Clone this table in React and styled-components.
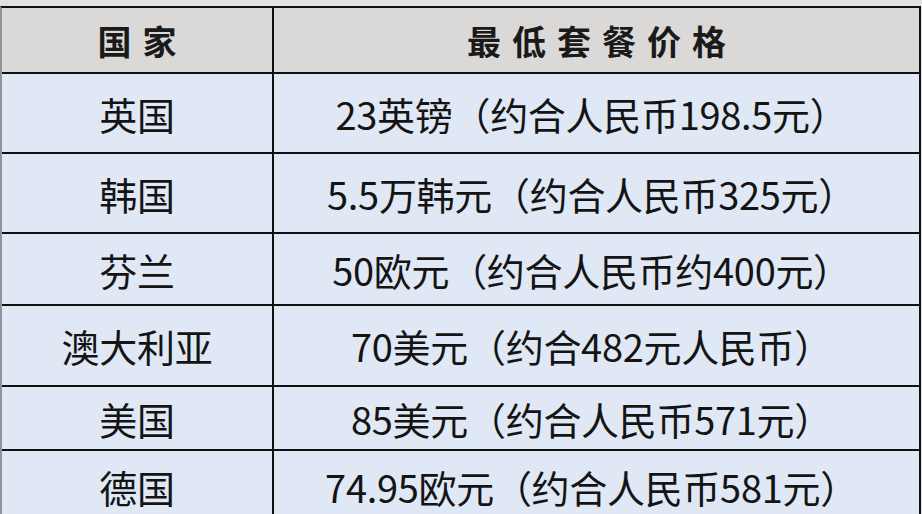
import React from 'react';
import styled, { createGlobalStyle } from 'styled-components';

const GlobalStyle = createGlobalStyle`
  html, body {
    margin: 0;
    padding: 0;
    background: #e2e2e5;
    overflow: hidden;
  }
`;

const Page = styled.div`
  width: 922px;
  height: 514px;
  padding-top: 6px;
  box-sizing: border-box;
  background: #e2e2e5;
  overflow: hidden;
`;

const Table = styled.div`
  width: 921px;
  border-top: 2px solid #111;
  border-left: 2px solid #8e949c;
  border-right: 2px solid #111;
  box-sizing: border-box;
`;

const Row = styled.div`
  display: grid;
  grid-template-columns: 272px 1fr;
  height: ${p => p.h}px;
  border-bottom: 2px solid #111;
  background: ${p => (p.head ? '#dbd9d8' : '#dfe8f4')};
`;

const Cell = styled.div`
  display: flex;
  align-items: center;
  justify-content: center;
  border-right: ${p => (p.first ? '2px solid #111' : 'none')};
  font-family: "Noto Sans CJK SC", "Noto Sans", sans-serif;
  font-size: 38px;
  color: #141414;
  white-space: nowrap;
  letter-spacing: -0.3px;
  padding-right: ${p => (p.first ? '0' : '10px')};
`;

const HeadCell = styled(Cell)`
  font-size: 34px;
  font-weight: 700;
  letter-spacing: 11px;
  padding-left: 11px;
  padding-right: 0;
  color: #1a1a1a;
`;

const rows = [
  { country: '英国', price: '23英镑（约合人民币198.5元）', h: 78 },
  { country: '韩国', price: '5.5万韩元（约合人民币325元）', h: 78 },
  { country: '芬兰', price: '50欧元（约合人民币约400元）', h: 70 },
  { country: '澳大利亚', price: '70美元（约合482元人民币）', h: 79 },
  { country: '美国', price: '85美元（约合人民币571元）', h: 62 },
  { country: '德国', price: '74.95欧元（约合人民币581元）', h: 70 },
];

export default function App() {
  return (
    <>
      <GlobalStyle />
      <Page>
        <Table>
          <Row head h={64}>
            <HeadCell first>国家</HeadCell>
            <HeadCell>最低套餐价格</HeadCell>
          </Row>
          {rows.map(r => (
            <Row key={r.country} h={r.h}>
              <Cell first>{r.country}</Cell>
              <Cell>{r.price}</Cell>
            </Row>
          ))}
        </Table>
      </Page>
    </>
  );
}
